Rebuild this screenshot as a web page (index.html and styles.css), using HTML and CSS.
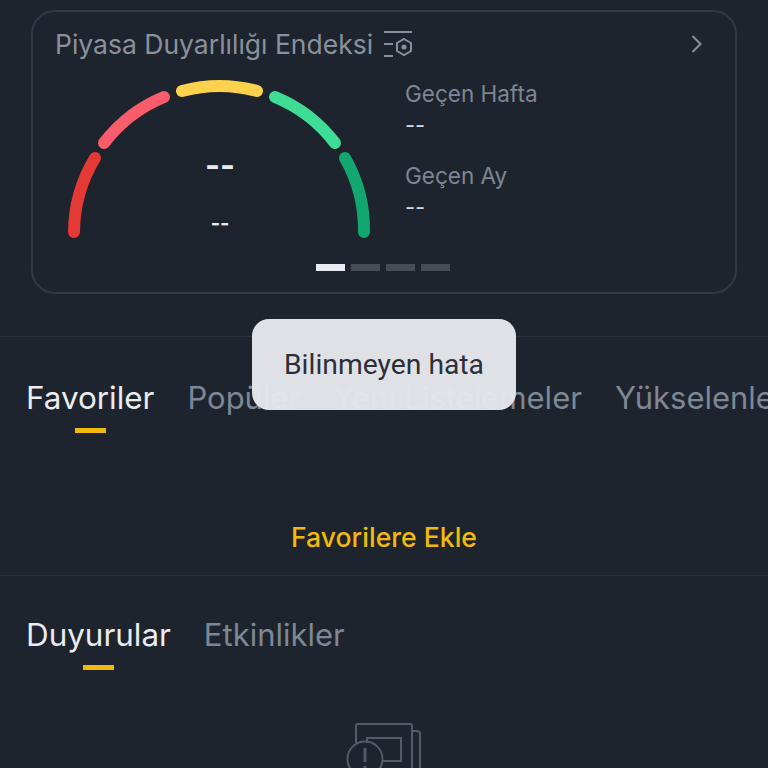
FILE: index.html
```html
<!DOCTYPE html>
<html lang="tr">
<head>
<meta charset="utf-8">
<title>Piyasa</title>
<link rel="stylesheet" href="styles.css">
</head>
<body>
<main class="page">
  <section class="card">
    <header class="card-head">
      <h2 class="card-title">Piyasa Duyarlılığı Endeksi</h2>
      <svg class="title-icon" width="30" height="28" viewBox="0 0 30 28" fill="none" stroke="#878e99" stroke-width="2">
        <path d="M1 2H29M1 14H10M1 26H10"/>
        <path d="M21 9L28 13V21L21 25L14 21V13Z"/>
        <circle cx="21" cy="17" r="2.6" fill="#878e99" stroke="none"/>
      </svg>
      <svg class="chevron" width="14" height="20" viewBox="0 0 14 20" fill="none" stroke="#8a919c" stroke-width="2">
        <path d="M2.5 2L10.5 10L2.5 18"/>
      </svg>
    </header>
    <div class="card-body">
      <div class="gauge">
        <svg class="gauge-arc" width="320" height="170" viewBox="0 0 320 170" fill="none" stroke-width="12" stroke-linecap="round">
          <path stroke="#e53935" d="M29 162A145 145 0 0 1 50 88"/>
          <path stroke="#fb5c6c" d="M59 73A145 145 0 0 1 119 27"/>
          <path stroke="#fdd14c" d="M137 21A145 145 0 0 1 212 21"/>
          <path stroke="#3fdc96" d="M230 27A145 145 0 0 1 290 73"/>
          <path stroke="#12a670" d="M300 88A145 145 0 0 1 319 162"/>
        </svg>
        <div class="gauge-value">--</div>
        <div class="gauge-label">--</div>
      </div>
      <div class="history">
        <div class="history-item">
          <div class="history-label">Geçen Hafta</div>
          <div class="history-value">--</div>
        </div>
        <div class="history-item">
          <div class="history-label">Geçen Ay</div>
          <div class="history-value">--</div>
        </div>
      </div>
    </div>
    <div class="pager">
      <span class="dot dot-active"></span>
      <span class="dot"></span>
      <span class="dot"></span>
      <span class="dot"></span>
    </div>
  </section>

  <section class="market">
    <nav class="tabs">
      <span class="tab tab-active">Favoriler</span>
      <span class="tab">Popüler</span>
      <span class="tab">Yeni Listelemeler</span>
      <span class="tab">Yükselenler</span>
    </nav>
    <div class="add-row"><span class="add-link">Favorilere Ekle</span></div>
  </section>

  <section class="news">
    <nav class="tabs">
      <span class="tab tab-active">Duyurular</span>
      <span class="tab">Etkinlikler</span>
    </nav>
    <div class="empty">
      <svg width="76" height="60" viewBox="0 0 76 60" fill="none" stroke="#545b66" stroke-width="2">
        <path d="M10 22V5Q10 3 12 3H64Q66 3 66 5V50"/>
        <path d="M66 10H71Q74 10 74 13V50"/>
        <path d="M26 17H55V40H36M21 22V17H26"/>
        <circle cx="19" cy="38" r="17.5"/>
        <path d="M19 27V41M19 45V48" stroke-width="3"/>
      </svg>
    </div>
  </section>

  <div class="toast">Bilinmeyen hata</div>
</main>
</body>
</html>
```

FILE: styles.css
```css
* { box-sizing: border-box; }
html, body { margin: 0; height: 100%; }
body {
  background: #1e242e;
  font-family: Inter, "Liberation Sans", sans-serif;
  color: #eaecef;
  overflow: hidden;
}
.page {
  position: relative;
  width: 768px;
  height: 768px;
  overflow: hidden;
  padding-top: 10px;
}
.card {
  margin: 0 31px;
  height: 284px;
  border: 2px solid #323944;
  border-radius: 24px;
  padding: 0 31px 0 22px;
  display: flex;
  flex-direction: column;
}
.card-head {
  display: flex;
  align-items: center;
  height: 62px;
  padding-top: 2px;
}
.card-title {
  margin: 0;
  font-size: 26.5px;
  font-weight: 400;
  color: #8a919c;
  white-space: nowrap;
}
.title-icon { margin-left: 10px; }
.chevron { margin-left: auto; }
.card-body {
  display: flex;
  height: 179px;
}
.gauge {
  position: relative;
  width: 350px;
  flex: none;
  margin-left: -10px;
}
.gauge-arc { display: block; overflow: visible; margin-top: -4px; }
.gauge-value {
  position: absolute;
  left: 0;
  width: 320px;
  top: 72px;
  padding-left: 30px;
  text-align: center;
  font-size: 32px;
  font-weight: 700;
  line-height: 40px;
  color: #eaecef;
}
.gauge-label {
  position: absolute;
  left: 0;
  width: 320px;
  top: 134px;
  padding-left: 30px;
  text-align: center;
  font-size: 20px;
  font-weight: 700;
  line-height: 30px;
  color: #eaecef;
}
.history {
  margin-left: 10px;
  margin-top: 5px;
  display: flex;
  flex-direction: column;
  gap: 20px;
}
.history-label {
  font-size: 22.5px;
  line-height: 30px;
  color: #7f8691;
}
.history-value {
  font-size: 22px;
  line-height: 32px;
  color: #d5d8dd;
}
.pager {
  display: flex;
  justify-content: center;
  gap: 5.7px;
  margin-top: 11px;
  margin-left: 7px;
}
.dot {
  width: 29px;
  height: 7px;
  background: #474d57;
}
.dot-active { background: #eaecf4; }
.market {
  margin-top: 42px;
  border-top: 1px solid #2a313b;
  height: 240px;
  border-bottom: 1px solid #2a313b;
}
.tabs {
  display: flex;
  gap: 33px;
  padding-left: 26px;
  white-space: nowrap;
}
.tab {
  position: relative;
  font-size: 31px;
  line-height: 40px;
  font-weight: 400;
  color: #7e8794;
}
.tab-active { color: #eaecef; font-size: 31.4px; }
.tab-active::after {
  content: "";
  position: absolute;
  left: 50%;
  bottom: -15px;
  width: 31px;
  height: 5px;
  margin-left: -15px;
  background: #f0b90b;
}
.market .tabs { padding-top: 41px; }
.add-row {
  text-align: center;
  padding-top: 99px;
}
.add-link {
  font-size: 26.6px;
  line-height: 40px;
  font-weight: 500;
  color: #f0b90b;
}
.news .tabs { padding-top: 39px; }
.empty {
  display: flex;
  justify-content: center;
  padding-top: 66px;
}
.toast {
  position: absolute;
  left: 252px;
  top: 319px;
  width: 264px;
  height: 91px;
  display: flex;
  align-items: center;
  justify-content: center;
  border-radius: 17px;
  background: rgba(228, 230, 235, 0.98);
  color: #2a2f38;
  font-family: Roboto, sans-serif;
  font-size: 28.3px;
}
```
